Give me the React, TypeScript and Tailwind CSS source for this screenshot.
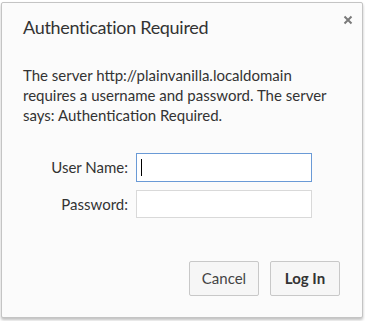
import React, { useState } from "react";

const App: React.FC = () => {
  const [username, setUsername] = useState("");
  const [password, setPassword] = useState("");

  return (
    <div
      className="w-[365px] h-[321px] bg-white pt-[2px] pl-[1px]"
      style={{ fontFamily: "Lato, 'Liberation Sans', sans-serif" }}
    >
      <div className="relative w-[362px] h-[316px] bg-[#fbfbfb] border border-[#c4c4c4] rounded-[2px] shadow-[0_2px_3px_rgba(0,0,0,0.25)] flex flex-col">
        <button className="absolute right-[7px] top-[10px] w-[14px] h-[14px] flex items-center justify-center">
          <svg width="10" height="10" viewBox="0 0 10 10">
            <path d="M1.5 1.5 L8.5 8.5 M8.5 1.5 L1.5 8.5" stroke="#7a7a7a" strokeWidth="2" />
          </svg>
        </button>
        <h1 className="pl-[21px] pt-[12px] text-[18px] tracking-[-0.3px] leading-[24px] text-[#333]">
          Authentication Required
        </h1>
        <p className="pl-[21px] pt-[26px] pr-[20px] text-[15px] leading-[20px] text-[#333]">
          The server http://plainvanilla.localdomain requires a username and
          password. The server says: Authentication Required.
        </p>
        <div className="grid grid-cols-[77px_176px] justify-start gap-x-[8px] gap-y-[8px] items-center pl-[49px] pt-[28px]">
          <label className="text-right text-[15px] text-[#333]">User Name:</label>
          <div className="relative">
            <input
              autoFocus
              value={username}
              onChange={(e) => setUsername(e.target.value)}
              className="block w-full h-[29px] border border-[#6a9ad6] bg-white px-[3px] text-[14px] outline-none caret-transparent"
            />
            {username === "" && (
              <span className="absolute left-[5px] top-[6px] w-[1px] h-[17px] bg-black" />
            )}
          </div>
          <label className="text-right text-[15px] text-[#333]">Password:</label>
          <input
            type="password"
            value={password}
            onChange={(e) => setPassword(e.target.value)}
            className="h-[28px] border border-[#d9d9d9] bg-white px-[3px] text-[14px] outline-none"
          />
        </div>
        <div className="mt-auto mb-[21px] flex justify-end gap-[11px] pr-[22px]">
          <button className="w-[70px] h-[35px] border border-[#c8c8c8] rounded-[2px] bg-[#f6f6f6] text-[15px] text-[#444]">
            Cancel
          </button>
          <button className="w-[70px] h-[35px] border border-[#c8c8c8] rounded-[2px] bg-[#f6f6f6] text-[15px] font-bold text-[#333]">
            Log In
          </button>
        </div>
      </div>
    </div>
  );
};

export default App;
